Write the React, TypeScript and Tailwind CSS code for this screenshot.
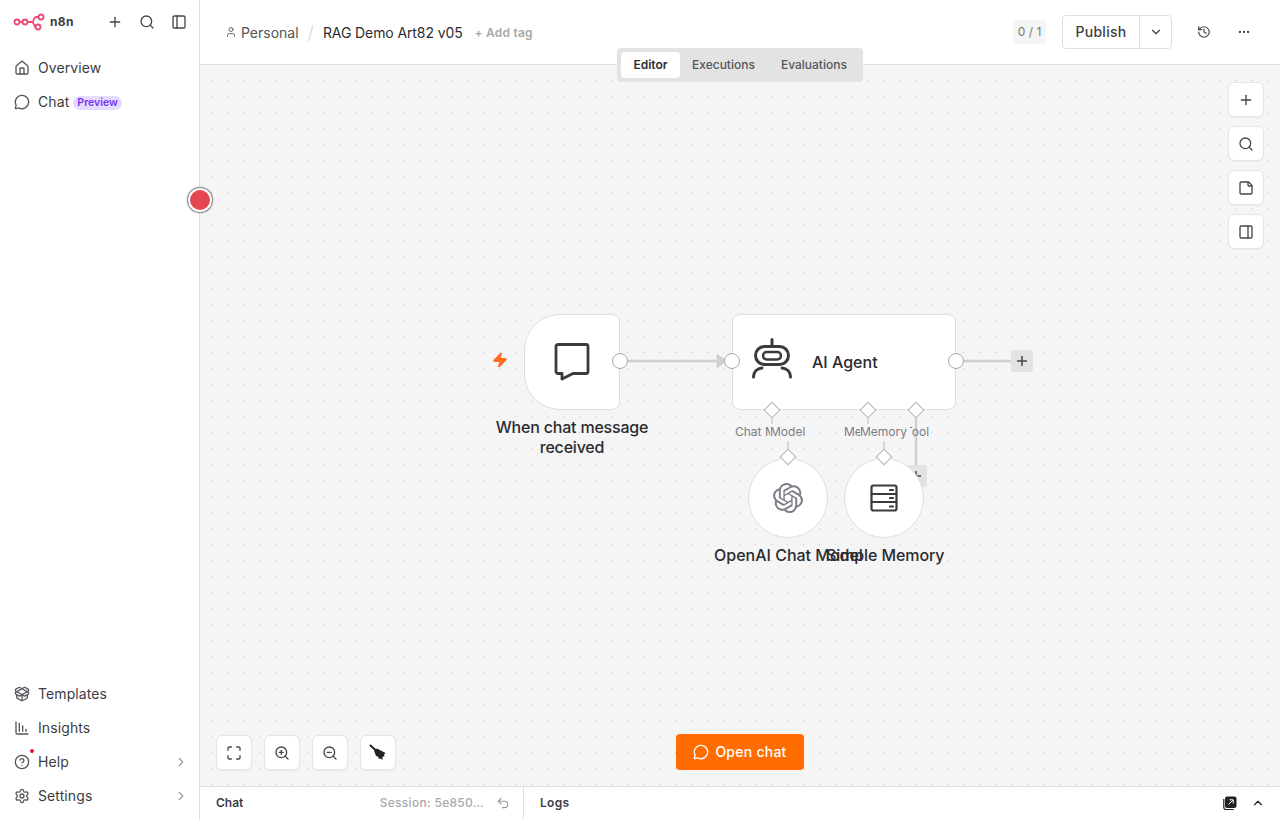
import {
  ChartColumnDecreasing,
  ChevronDown,
  ChevronRight,
  ChevronUp,
  CircleHelp,
  Ellipsis,
  History,
  House,
  Maximize,
  MessageCircle,
  PackageOpen,
  PanelLeft,
  PanelRight,
  Plus,
  Search,
  Settings,
  StickyNote,
  Undo2,
  User,
  Zap,
  ZoomIn,
  ZoomOut,
} from "lucide-react";
import { SiOpenai } from "react-icons/si";
import type { ReactNode } from "react";

function Logo() {
  return (
    <svg width="32" height="18" viewBox="0 0 32 18" fill="none" stroke="#ea4b71" strokeWidth="1.800">
      <circle cx="4" cy="9" r="2.500" />
      <circle cx="12" cy="9" r="2.500" />
      <circle cx="28" cy="4" r="2.500" />
      <circle cx="25" cy="14" r="2.500" />
      <path d="M6.500 9h3M14.500 9h4.500c2 0 1.500-5 4-5h2.500M19 9c2 0 1.500 3.500 3.500 5" />
    </svg>
  );
}

function NavItem({ icon, label, badge, chevron, dot }: { icon: ReactNode; label: string; badge?: boolean; chevron?: boolean; dot?: boolean }) {
  return (
    <div className="relative flex h-[34px] items-center pr-[11px] pl-[14px] text-[14px] text-[#3d3d44]">
      <span className="mt-[2px] w-[24px] text-[#55555c]">{icon}</span>
      <span className="tracking-[0.1px]">{label}</span>
      {badge && (
        <span className="mt-[4px] ml-[4px] rounded-full bg-[#e4dcff] px-[4px] text-[10.5px] leading-[14px] font-semibold text-[#7a2ff7]">Preview</span>
      )}
      {chevron && <ChevronRight className="mt-[2px] ml-auto text-[#999]" size={14} />}
      {dot && <span className="absolute top-[5px] left-[30px] h-[4px] w-[4px] rounded-full bg-[#e8132f]" />}
    </div>
  );
}

function Sidebar() {
  return (
    <aside className="flex h-full w-[200px] shrink-0 flex-col border-r border-[#dedede] bg-white">
      <div className="flex h-[44px] items-center pl-[13px] text-[#44444b]">
        <Logo />
        <span className="ml-[5px] text-[12px] font-bold tracking-[0.4px] text-[#3d3d44]">n8n</span>
        <Plus className="ml-auto" size={16} />
        <Search className="ml-[16px]" size={16} />
        <PanelLeft className="mr-[12px] ml-[16px]" size={16} />
      </div>
      <div className="mt-[6px]">
        <NavItem icon={<House size={16} />} label="Overview" />
        <NavItem icon={<MessageCircle size={16} />} label="Chat" badge />
      </div>
      <div className="mt-auto mb-[8px]">
        <NavItem icon={<PackageOpen size={16} />} label="Templates" />
        <NavItem icon={<ChartColumnDecreasing size={16} />} label="Insights" />
        <NavItem icon={<CircleHelp size={16} />} label="Help" chevron dot />
        <NavItem icon={<Settings size={16} />} label="Settings" chevron />
      </div>
    </aside>
  );
}

function Header() {
  return (
    <header className="flex h-[65px] shrink-0 items-center border-b border-[#dedede] bg-white pr-[29px] pl-[25px]">
      <User className="text-[#666]" size={12} />
      <span className="ml-[4px] text-[14px] text-[#555]">Personal</span>
      <span className="mx-[9px] text-[18px] font-light text-[#d8d8d8]">/</span>
      <span className="text-[14px] tracking-[-0.1px] text-[#2b2b30]">RAG Demo Art82 v05</span>
      <span className="mt-[1px] ml-[12px] text-[12px] font-semibold tracking-[0.2px] text-[#a8a8a8]">+ Add tag</span>
      <div className="ml-auto flex h-[24px] w-[33px] items-center justify-center rounded-[4px] bg-[#f5f5f5] text-[12px] text-[#777]">0 / 1</div>
      <div className="ml-[16px] flex h-[34px] w-[110px] items-center rounded-[4px] border border-[#dedede] text-[#3d3d44]">
        <span className="w-[77px] border-r border-[#dedede] text-center text-[14px] leading-[32px] font-medium tracking-[0.3px]">Publish</span>
        <ChevronDown className="mx-auto" size={14} />
      </div>
      <History className="ml-[25px] text-[#44444b]" size={14} />
      <Ellipsis className="ml-[26px] text-[#44444b]" size={14} />
    </header>
  );
}

function ToolButton({ children }: { children: ReactNode }) {
  return (
    <div className="flex h-[35px] w-[36px] items-center justify-center rounded-[6px] border border-[#e4e4e4] bg-white text-[#44444b] shadow-[0_1px_2px_rgba(0,0,0,0.04)]">
      {children}
    </div>
  );
}

function ChatBubble() {
  return (
    <svg width="38" height="40" viewBox="0 0 38 40" fill="none" stroke="#3a3a3f" strokeWidth="2.800" strokeLinejoin="round">
      <path d="M3 4.500a2 2 0 0 1 2-2h28a2 2 0 0 1 2 2v25a2 2 0 0 1-2 2H20l-11 5.500v-5.500H5a2 2 0 0 1-2-2z" />
    </svg>
  );
}

function Robot() {
  return (
    <svg className="mb-[6px]" width="42" height="42" viewBox="0 0 42 42" fill="none" stroke="#3a3a3f" strokeWidth="3" strokeLinecap="round">
      <path d="M21 1.500v6" />
      <rect x="4.500" y="8.500" width="33" height="18" rx="9" />
      <rect x="12" y="14" width="18" height="7.500" rx="3.700" strokeWidth="2.500" />
      <path d="M2.500 39c0-5 3.500-8.500 8.500-9M39.500 39c0-5-3.500-8.500-8.500-9" />
    </svg>
  );
}

function ServerIcon() {
  return (
    <svg width="28" height="28" viewBox="0 0 28 28" fill="none" stroke="#3a3a3f" strokeWidth="2.200" strokeLinecap="round">
      <rect x="1.500" y="1.500" width="25" height="25" rx="2" />
      <path d="M1.500 10h25M1.500 18h25M20 6h3M20 14h3M20 22.500h3" />
    </svg>
  );
}

function Broom() {
  return (
    <svg width="18" height="18" viewBox="0 0 18 18" fill="#222">
      <path d="M1.500 1.500L6.500 6" fill="none" stroke="#222" strokeWidth="2" strokeLinecap="round" />
      <path d="M5 6.500L8 4.500L16.500 9L15 10.500L15.500 12L13.500 13L13.500 16L11.500 14.500L10 15L9 12.500L7 12z" />
    </svg>
  );
}

function Edges() {
  return (
    <svg className="absolute inset-0" width="1080" height="721" fill="none" stroke="#d0d0d0" strokeWidth="2.500">
      <path d="M428 296h90" />
      <path d="M517 289.500l10 6.500-10 6.500z" fill="#d0d0d0" strokeWidth="1" />
      <path d="M764 296h48" />
      <path d="M716 352v60" />
      <path d="M572 353v6M588 384v-8M584 370l-1-1M668 353v6M684 384v-8" strokeWidth="1.500" />
      <rect x="811" y="285" width="22" height="22" rx="3" fill="#e3e3e3" stroke="none" />
      <rect x="705" y="400" width="22" height="22" rx="3" fill="#e3e3e3" stroke="none" />
      <path d="M817 296h10M822 291v10" stroke="#44444b" strokeWidth="1.500" />
      <path d="M711 411h10M716 406v10" stroke="#44444b" strokeWidth="1.500" />
    </svg>
  );
}

function Canvas() {
  return (
    <main className="relative flex-1 overflow-hidden bg-[#f5f5f5] bg-[radial-gradient(circle_at_11.5px_15.5px,#cacaca_0.7px,transparent_1px)] bg-[length:16px_16px]">
      <Edges />

      <Zap className="absolute top-[287px] left-[292px] fill-[#ff6d1f] text-[#ff6d1f]" size={16} />

      {/* trigger */}
      <div className="absolute top-[249px] left-[324px] flex h-[96px] w-[96px] items-center justify-center rounded-tl-[36px] rounded-tr-[8px] rounded-br-[8px] rounded-bl-[36px] border border-[#dedede] bg-white">
        <ChatBubble />
      </div>
      <div className="absolute top-[352px] left-[272px] w-[200px] text-center text-[16px] leading-[20px] font-medium tracking-[-0.2px] text-[#2b2b30]">
        When chat message received
      </div>

      {/* agent */}
      <div className="absolute top-[249px] left-[532px] flex h-[96px] w-[224px] items-center rounded-[8px] border border-[#dedede] bg-white pl-[18px]">
        <Robot />
        <span className="ml-[19px] text-[16px] font-medium text-[#2b2b30]">AI Agent</span>
      </div>

      {/* sub nodes */}
      <div className="absolute top-[393px] left-[548px] flex h-[80px] w-[80px] items-center justify-center rounded-full border border-[#dedede] bg-white">
        <SiOpenai className="text-[#7d7d87]" size={30} />
      </div>
      <div className="absolute top-[393px] left-[644px] flex h-[80px] w-[80px] items-center justify-center rounded-full border border-[#dedede] bg-white">
        <ServerIcon />
      </div>
      <div className="absolute top-[480px] left-[514px] text-[16px] leading-[20px] font-medium whitespace-nowrap text-[#2b2b30]">OpenAI Chat Model</div>
      <div className="absolute top-[480px] left-[626px] text-[16px] leading-[20px] font-medium tracking-[-0.1px] whitespace-nowrap text-[#2b2b30]">Simple Memory</div>

      {/* port labels, later ones cover earlier ones as in the editor */}
      <div className="absolute top-[359px] left-[535px] text-[12px] leading-[16px] whitespace-nowrap text-[#7b7b82]">Chat Model</div>
      <div className="absolute top-[359px] left-[644px] text-[12px] leading-[16px] whitespace-nowrap text-[#7b7b82]">Memory</div>
      <div className="absolute top-[359px] left-[705px] text-[12px] leading-[16px] whitespace-nowrap text-[#7b7b82]">Tool</div>
      <div className="absolute top-[359px] left-[570px] bg-[#f5f5f5] text-[12px] leading-[16px] whitespace-nowrap text-[#7b7b82]">Model</div>
      <div className="absolute top-[359px] left-[660px] bg-[#f5f5f5] pr-[3px] text-[12px] leading-[16px] whitespace-nowrap text-[#7b7b82]">Memory</div>

      {/* ports */}
      <div className="absolute top-[288px] left-[412px] h-[16px] w-[16px] rounded-full border border-[#a8a8a8] bg-white" />
      <div className="absolute top-[288px] left-[524px] h-[16px] w-[16px] rounded-full border border-[#a8a8a8] bg-white" />
      <div className="absolute top-[288px] left-[748px] h-[16px] w-[16px] rounded-full border border-[#a8a8a8] bg-white" />
      <div className="absolute top-[339px] left-[566px] h-[12px] w-[12px] rotate-45 border border-[#b5b5b5] bg-white" />
      <div className="absolute top-[339px] left-[662px] h-[12px] w-[12px] rotate-45 border border-[#b5b5b5] bg-white" />
      <div className="absolute top-[339px] left-[710px] h-[12px] w-[12px] rotate-45 border border-[#b5b5b5] bg-white" />
      <div className="absolute top-[386px] left-[582px] h-[12px] w-[12px] rotate-45 border border-[#b5b5b5] bg-white" />
      <div className="absolute top-[386px] left-[678px] h-[12px] w-[12px] rotate-45 border border-[#b5b5b5] bg-white" />

      <div className="absolute top-[17px] right-[16px] flex flex-col gap-[9px]">
        <ToolButton><Plus size={16} /></ToolButton>
        <ToolButton><Search size={16} /></ToolButton>
        <ToolButton><StickyNote size={16} /></ToolButton>
        <ToolButton><PanelRight size={16} /></ToolButton>
      </div>

      <div className="absolute bottom-[16px] left-[16px] flex gap-[12px]">
        <ToolButton><Maximize size={16} /></ToolButton>
        <ToolButton><ZoomIn size={16} /></ToolButton>
        <ToolButton><ZoomOut size={16} /></ToolButton>
        <ToolButton><Broom /></ToolButton>
      </div>

      <div className="absolute bottom-[16px] left-[476px] flex h-[36px] w-[128px] items-center justify-center gap-[6px] rounded-[4px] bg-[#ff6d00] pb-[1px] text-[14px] font-medium tracking-[0.25px] text-white">
        <MessageCircle size={16} />
        Open chat
      </div>
    </main>
  );
}

function BottomPanel() {
  return (
    <footer className="flex h-[34px] shrink-0 items-center border-t border-[#dedede] bg-white pb-[1px] text-[12px]">
      <div className="flex h-full w-[324px] items-center border-r border-[#dedede] pr-[13px] pl-[16px]">
        <span className="font-semibold text-[#3d3d44]">Chat</span>
        <span className="ml-auto font-medium tracking-[0.3px] text-[#aaa]">Session: 5e850…</span>
        <Undo2 className="ml-[12px] text-[#999]" size={14} />
      </div>
      <span className="ml-[16px] font-semibold tracking-[0.3px] text-[#3d3d44]">Logs</span>
      <svg className="ml-auto" width="14" height="14" viewBox="0 0 14 14">
        <rect x="2" y="0.500" width="11.500" height="11.500" rx="2" fill="#222" />
        <path d="M.8 3v8.500a2 2 0 0 0 2 2h8" fill="none" stroke="#222" strokeWidth="1.200" />
        <path d="M5.500 8.500l4.500-4.500M6.500 3.800H10.200V7.500" fill="none" stroke="#fff" strokeWidth="1" />
      </svg>
      <ChevronUp className="mr-[15px] ml-[14px] text-[#222]" size={14} />
    </footer>
  );
}

export default function App() {
  return (
    <div className="relative flex h-screen w-full overflow-hidden font-[Inter,sans-serif]">
      <Sidebar />
      <div className="flex min-w-0 flex-1 flex-col">
        <Header />
        <Canvas />
        <BottomPanel />
      </div>

      {/* view switcher sits across the header line */}
      <div className="absolute top-[48px] left-[617px] flex h-[34px] w-[246px] items-center rounded-[4px] bg-[#e3e3e3] p-[4px] text-[12px] font-medium text-[#55555c]">
        <span className="flex h-[26px] w-[59px] items-center justify-center rounded-[4px] bg-white font-semibold text-[#2b2b30]">Editor</span>
        <span className="ml-[12px]">Executions</span>
        <span className="ml-[26px]">Evaluations</span>
      </div>

      <div className="absolute top-[188px] left-[188px] h-[24px] w-[24px] rounded-full border-2 border-white bg-[#e5454f] shadow-[0_0_0_1px_#888,0_0_3px_rgba(0,0,0,0.5)]" />
    </div>
  );
}
